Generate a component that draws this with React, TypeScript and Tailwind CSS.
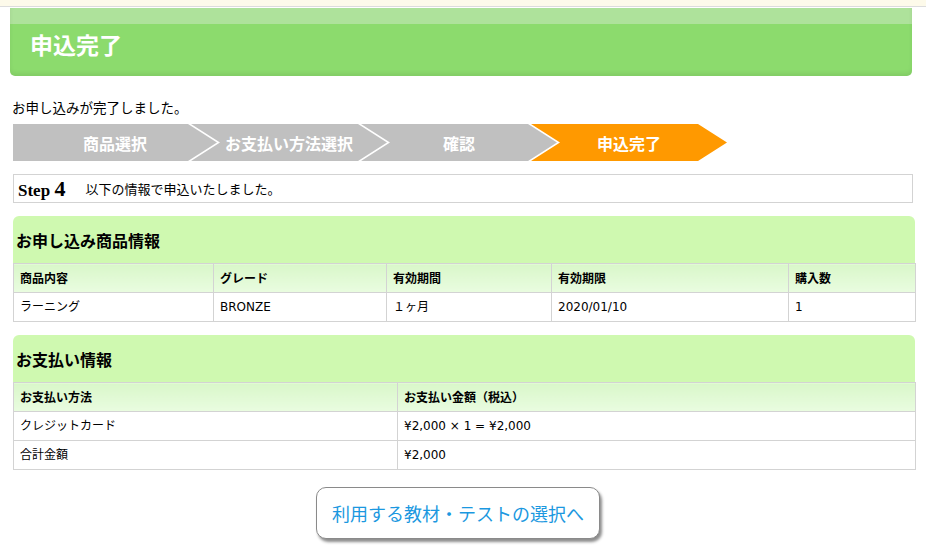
import React from "react";

const jp = "font-['Noto_Sans_CJK_JP','Noto_Sans',sans-serif]";
const vd = "font-['DejaVu_Sans','Noto_Sans_CJK_JP',sans-serif]";

const steps = ["商品選択", "お支払い方法選択", "確認", "申込完了"];

function StepBar() {
  return (
    <div className="ml-[13px] mt-[8px] flex h-[37px]">
      {steps.map((s, i) => {
        const first = i === 0;
        const active = i === 3;
        return (
          <div
            key={s}
            className={
              (first
                ? "w-[204px] [clip-path:polygon(0_0,calc(100%_-_29px)_0,100%_50%,calc(100%_-_29px)_100%,0_100%)] "
                : "ml-[-26px] w-[196px] [clip-path:polygon(0_0,calc(100%_-_29px)_0,100%_50%,calc(100%_-_29px)_100%,0_100%,29px_50%)] ") +
              (active ? "bg-[#ff9900] " : "bg-[#c0c0c0] ") +
              "flex items-center justify-center text-[16px] font-bold text-white " +
              jp
            }
          >
            {s}
          </div>
        );
      })}
    </div>
  );
}

function SectionHead({ title }: { title: string }) {
  return (
    <div
      className={
        "flex h-[47px] items-center rounded-t-[6px] bg-[#cff9b0] pl-[3px] pt-[1px] text-[16px] font-bold text-black " +
        jp
      }
    >
      {title}
    </div>
  );
}

const th =
  "h-[29px] border border-[#d3d3d3] bg-[linear-gradient(to_bottom,#d9f7c9,#e9fce0)] px-[6px] text-left align-middle text-[12px] font-bold text-black " +
  jp;
const td = "h-[29px] border border-[#d3d3d3] bg-white px-[6px] text-left align-middle text-[12px] text-black " + vd;

export default function App() {
  return (
    <div className={"h-[560px] w-[926px] overflow-hidden bg-white " + jp}>
      <div className="h-[7px] border-b border-[#dcdcdc] bg-[#fdfaea]" />
      <div className="ml-[10px] mt-[1px] h-[68px] w-[902px] rounded-b-[5px] bg-[linear-gradient(to_bottom,#aee29b_0,#aee29b_16px,#8cdb6d_16px,#8cdb6d_100%)] shadow-[inset_0_-3px_4px_rgba(0,0,0,0.07)]">
        <div className="flex h-full items-center pl-[20px] pt-[4px] text-[23px] font-bold text-white">
          申込完了
        </div>
      </div>

      <div className="ml-[12px] mt-[22px] text-[13.5px] leading-[18px] text-black">お申し込みが完了しました。</div>

      <StepBar />

      <div className="ml-[13px] mt-[13px] flex h-[29px] w-[900px] items-center border border-[#d3d3d3] bg-white pl-[4px]">
        <span className="font-['Liberation_Serif',serif] text-[17px] font-bold leading-none text-black">
          Step <span className="text-[22px]">4</span>
        </span>
        <span className="ml-[20px] text-[13px] text-black">以下の情報で申込いたしました。</span>
      </div>

      <div className="ml-[13px] mt-[13px] w-[902px]">
        <SectionHead title="お申し込み商品情報" />
        <table className="w-[902px] table-fixed border-collapse">
          <colgroup>
            <col className="w-[200px]" />
            <col className="w-[173px]" />
            <col className="w-[165px]" />
            <col className="w-[237px]" />
            <col className="w-[127px]" />
          </colgroup>
          <thead>
            <tr>
              <th className={th}>商品内容</th>
              <th className={th}>グレード</th>
              <th className={th}>有効期間</th>
              <th className={th}>有効期限</th>
              <th className={th}>購入数</th>
            </tr>
          </thead>
          <tbody>
            <tr>
              <td className={td}>ラーニング</td>
              <td className={td}>BRONZE</td>
              <td className={td}>１ヶ月</td>
              <td className={td}>2020/01/10</td>
              <td className={td}>1</td>
            </tr>
          </tbody>
        </table>
      </div>

      <div className="ml-[13px] mt-[13px] w-[902px]">
        <SectionHead title="お支払い情報" />
        <table className="w-[902px] table-fixed border-collapse">
          <colgroup>
            <col className="w-[384px]" />
            <col className="w-[518px]" />
          </colgroup>
          <thead>
            <tr>
              <th className={th}>お支払い方法</th>
              <th className={th}>お支払い金額（税込）</th>
            </tr>
          </thead>
          <tbody>
            <tr>
              <td className={td}>クレジットカード</td>
              <td className={td}>¥2,000 × 1 = ¥2,000</td>
            </tr>
            <tr>
              <td className={td}>合計金額</td>
              <td className={td}>¥2,000</td>
            </tr>
          </tbody>
        </table>
      </div>

      <div className="mt-[17px] flex">
        <button className="ml-[316px] flex h-[52px] w-[284px] items-center justify-center rounded-[10px] border border-[#8a8a8a] bg-white text-[18px] text-[#1b98e0] shadow-[2px_3px_3px_rgba(0,0,0,0.45)]">
          利用する教材・テストの選択へ
        </button>
      </div>
    </div>
  );
}
